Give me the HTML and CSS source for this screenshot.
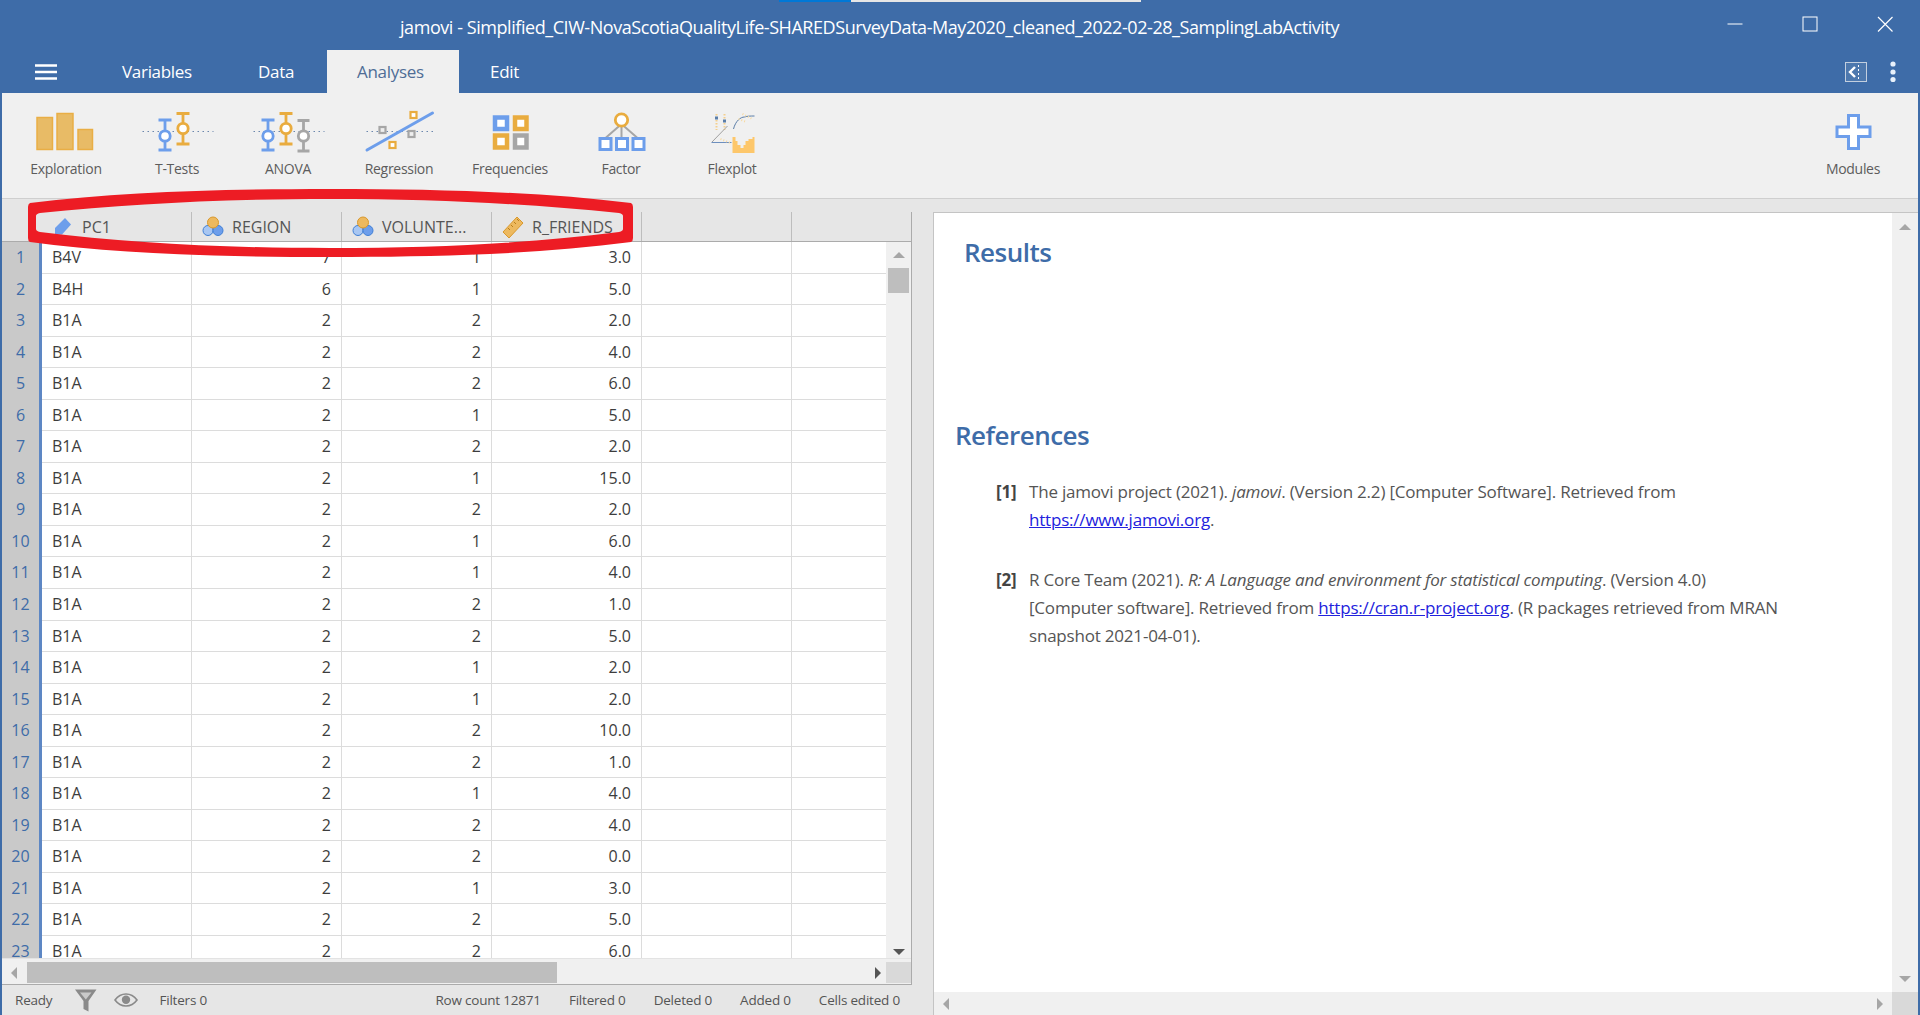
FILE: index.html
```html
<!DOCTYPE html>
<html lang="en">
<head>
    <meta charset="UTF-8">
    <title>jamovi</title>
    <link rel="stylesheet" href="styles.css">
</head>
<body>
    <svg width="0" height="0" class="defs">
        <symbol id="ic-nominal" viewBox="0 0 22 24">
            <circle cx="6" cy="15.500" r="5" fill="#a9c7f2" stroke="#3f7fd6" stroke-width="1"/>
            <circle cx="16" cy="15.500" r="5" fill="#6d9eeb" stroke="#3f7fd6" stroke-width="1"/>
            <circle cx="11" cy="7.500" r="5.500" fill="#edb95f" stroke="#d9982c" stroke-width="1"/>
        </symbol>
    </svg>

    <!-- Title bar -->
    <div class="titlebar">
        <div class="focus-strip"><span class="focus-on"></span></div>
        <div class="title">jamovi - Simplified_CIW-NovaScotiaQualityLife-SHAREDSurveyData-May2020_cleaned_2022-02-28_SamplingLabActivity</div>
        <div class="winbtns">
            <svg width="16" height="16" viewBox="0 0 16 16"><path d="M0.500 8H15.500" stroke="#fff" stroke-width="1" fill="none"/></svg>
            <svg width="16" height="16" viewBox="0 0 16 16"><rect x="1" y="1" width="14" height="14" stroke="#fff" stroke-width="1" fill="none"/></svg>
            <svg width="16" height="16" viewBox="0 0 16 16"><path d="M1 1L15.500 15.500M15.500 1L1 15.500" stroke="#fff" stroke-width="1.200" fill="none"/></svg>
        </div>
    </div>

    <!-- Tabs -->
    <div class="tabbar">
        <svg class="burger" width="22" height="16" viewBox="0 0 22 16"><path d="M0 1.500H22M0 8H22M0 14.500H22" stroke="#fff" stroke-width="2.600"/></svg>
        <div class="tab tab-variables">Variables</div>
        <div class="tab tab-data">Data</div>
        <div class="tab tab-analyses">Analyses</div>
        <div class="tab tab-edit">Edit</div>
        <svg class="split-toggle" width="22" height="20" viewBox="0 0 22 20">
            <rect x="0.500" y="0.500" width="21" height="19" fill="#4d78ae" stroke="#c3cfdf"/>
            <path d="M10 5L5 10L10 15" stroke="#fff" stroke-width="2.400" fill="none"/>
            <path d="M13.500 3V17" stroke="#fff" stroke-width="1" stroke-dasharray="2 2"/>
        </svg>
        <svg class="kebab" width="6" height="22" viewBox="0 0 6 22"><circle cx="3" cy="3" r="2.600" fill="#e8f1fb"/><circle cx="3" cy="11" r="2.600" fill="#e8f1fb"/><circle cx="3" cy="18.500" r="2.600" fill="#e8f1fb"/></svg>
    </div>

    <!-- Toolbar -->
    <div class="toolbar">
        <div class="tool">
            <svg width="111" height="50" viewBox="10.500 108 111 50">
                <g fill="#e8bb66" stroke="#e9ae45" stroke-width="1.500">
                    <rect x="36.500" y="117.500" width="15.500" height="32"/>
                    <rect x="56.500" y="113.500" width="16" height="36"/>
                    <rect x="77.500" y="129.500" width="14.500" height="20"/>
                </g>
            </svg>
            <div class="tool-label">Exploration</div>
        </div>
        <div class="tool">
            <svg width="111" height="50" viewBox="121.500 108 111 50">
                <path d="M142 131.500H213" stroke="#6b87ad" stroke-width="1" stroke-dasharray="1.500 3.500"/>
                <path d="M158 120H171M164.500 120V150M158 150H171" stroke="#6d9eeb" stroke-width="2.800" fill="none"/>
                <circle cx="164.500" cy="136" r="5.200" fill="#fff" stroke="#6d9eeb" stroke-width="2.800"/>
                <path d="M176 113.500H189M182.500 113.500V144M176 144H189" stroke="#e9ac3f" stroke-width="2.800" fill="none"/>
                <circle cx="182.500" cy="128.500" r="5.200" fill="#fff" stroke="#e9ac3f" stroke-width="2.800"/>
            </svg>
            <div class="tool-label">T-Tests</div>
        </div>
        <div class="tool">
            <svg width="111" height="50" viewBox="232.500 108 111 50">
                <path d="M253 131.500H324" stroke="#6b87ad" stroke-width="1" stroke-dasharray="1.500 3.500"/>
                <path d="M261 120H274M267.500 120V150M261 150H274" stroke="#6d9eeb" stroke-width="2.800" fill="none"/>
                <circle cx="267.500" cy="136" r="5.200" fill="#fff" stroke="#6d9eeb" stroke-width="2.800"/>
                <path d="M279 113.500H292M285.500 113.500V144M279 144H292" stroke="#e9ac3f" stroke-width="2.800" fill="none"/>
                <circle cx="285.500" cy="128.500" r="5.200" fill="#fff" stroke="#e9ac3f" stroke-width="2.800"/>
                <path d="M297 120.500H309M303 120.500V151M297 151H309" stroke="#a6a6a6" stroke-width="2.800" fill="none"/>
                <circle cx="303" cy="136" r="5.200" fill="#fff" stroke="#a6a6a6" stroke-width="2.800"/>
            </svg>
            <div class="tool-label">ANOVA</div>
        </div>
        <div class="tool">
            <svg width="111" height="50" viewBox="343.500 108 111 50">
                <path d="M366 131.500H434" stroke="#6b87ad" stroke-width="1" stroke-dasharray="1.500 3.500"/>
                <path d="M366.500 150L432 113" stroke="#6d9eeb" stroke-width="3" stroke-linecap="round"/>
                <g fill="#fff" stroke-width="2.200">
                    <rect x="410" y="112" width="6" height="6" stroke="#e9ac3f"/>
                    <rect x="379" y="127" width="6" height="6" fill="#eee" stroke="#a6a6a6"/>
                    <rect x="408" y="131" width="6" height="6" fill="#eee" stroke="#a6a6a6"/>
                    <rect x="389" y="142" width="6" height="6" stroke="#e9ac3f"/>
                </g>
            </svg>
            <div class="tool-label">Regression</div>
        </div>
        <div class="tool">
            <svg width="111" height="50" viewBox="454.500 108 111 50">
                <g fill="#fff" stroke-width="4.500">
                    <rect x="494.500" y="117.500" width="12" height="11.500" stroke="#6d9eeb"/>
                    <rect x="514.500" y="117.500" width="11.500" height="11.500" stroke="#e9ac3f"/>
                    <rect x="494.500" y="135.500" width="12" height="12" stroke="#e9ac3f"/>
                    <rect x="514.500" y="135.500" width="11.500" height="12" stroke="#a6a6a6"/>
                </g>
            </svg>
            <div class="tool-label">Frequencies</div>
        </div>
        <div class="tool">
            <svg width="111" height="50" viewBox="565.500 108 111 50">
                <path d="M621 124L605 138M621 124V138M621 124L637 138" stroke="#a6a6a6" stroke-width="2" fill="none"/>
                <circle cx="621" cy="120" r="6.200" fill="#fff" stroke="#e9ac3f" stroke-width="2.800"/>
                <g fill="#fff" stroke="#6d9eeb" stroke-width="3">
                    <rect x="599.500" y="138.500" width="11" height="11"/>
                    <rect x="616" y="138.500" width="11" height="11"/>
                    <rect x="632.500" y="138.500" width="11" height="11"/>
                </g>
            </svg>
            <div class="tool-label">Factor</div>
        </div>
        <div class="tool">
            <svg width="111" height="50" viewBox="676.500 108 111 50">
                <path d="M716 114V130M724 114V130" stroke="#f4cf8e" stroke-width="2" stroke-dasharray="1.500 1.500"/>
                <path d="M714.500 118H717.500M722.500 121H725.500" stroke="#5b7ea8" stroke-width="3"/>
                <path d="M733 129C735 121 740 117 744 117C747 116 750 116 754 116" stroke="#5b7ea8" stroke-width="1" fill="none"/>
                <path d="M738 119L746 122M742 114L752 119" stroke="#f7d9a0" stroke-width="2" stroke-dasharray="1 2"/>
                <path d="M711.500 142L727 126" stroke="#a0a0a0" stroke-width="1"/>
                <path d="M711 142.500H731" stroke="#6d8fbe" stroke-width="1"/>
                <path d="M720 139L730 143" stroke="#f7d9a0" stroke-width="2" stroke-dasharray="1 2"/>
                <path d="M732 153V137H735V141H737V145H740V148H743V145H745V141H748V139H752V137H754V153Z" fill="#fdc76b"/>
            </svg>
            <div class="tool-label">Flexplot</div>
        </div>
        <div class="tool tool-modules">
            <svg width="111" height="50" viewBox="1798.500 108 111 50">
                <path d="M1849 115.500H1859V127H1870.500V136.500H1859V148.500H1849V136.500H1837.500V127H1849Z" fill="#fff" stroke="#6d9eeb" stroke-width="3"/>
            </svg>
            <div class="tool-label">Modules</div>
        </div>
    </div>

    <!-- Main area -->
    <div class="workspace">
        <div class="data-pane">
            <div class="grid">
                <div class="grid-head">
                    <div class="head-cell">
                        <svg class="head-icon" width="22" height="24" viewBox="0 0 22 24"><path d="M3 13L13 3L19 9.500L10 19.500H3Z" fill="#6d9eeb"/></svg>
                        <span>PC1</span>
                    </div>
                    <div class="head-cell">
                        <svg class="head-icon" width="22" height="24"><use href="#ic-nominal"/></svg>
                        <span>REGION</span>
                    </div>
                    <div class="head-cell">
                        <svg class="head-icon" width="22" height="24"><use href="#ic-nominal"/></svg>
                        <span>VOLUNTE...</span>
                    </div>
                    <div class="head-cell">
                        <svg class="head-icon" width="22" height="24" viewBox="0 0 22 24">
                            <path d="M1 17L15 2L21 8L7 23Z" fill="#edb95f" stroke="#d9982c" stroke-width="1"/>
                            <path d="M6 13L8 15M9 10L11 12M12 7L14 9M15 4L17 6" stroke="#b97f1c" stroke-width="1"/>
                        </svg>
                        <span>R_FRIENDS</span>
                    </div>
                    <div class="head-cell"></div>
                </div>
                <div class="grid-body">
                    <div class="rows">
                        <div class="row"><div class="num">1</div><div class="cell">B4V</div><div class="cell r">7</div><div class="cell r">1</div><div class="cell r">3.0</div><div class="cell"></div><div class="cell last"></div></div>
                        <div class="row"><div class="num">2</div><div class="cell">B4H</div><div class="cell r">6</div><div class="cell r">1</div><div class="cell r">5.0</div><div class="cell"></div><div class="cell last"></div></div>
                        <div class="row"><div class="num">3</div><div class="cell">B1A</div><div class="cell r">2</div><div class="cell r">2</div><div class="cell r">2.0</div><div class="cell"></div><div class="cell last"></div></div>
                        <div class="row"><div class="num">4</div><div class="cell">B1A</div><div class="cell r">2</div><div class="cell r">2</div><div class="cell r">4.0</div><div class="cell"></div><div class="cell last"></div></div>
                        <div class="row"><div class="num">5</div><div class="cell">B1A</div><div class="cell r">2</div><div class="cell r">2</div><div class="cell r">6.0</div><div class="cell"></div><div class="cell last"></div></div>
                        <div class="row"><div class="num">6</div><div class="cell">B1A</div><div class="cell r">2</div><div class="cell r">1</div><div class="cell r">5.0</div><div class="cell"></div><div class="cell last"></div></div>
                        <div class="row"><div class="num">7</div><div class="cell">B1A</div><div class="cell r">2</div><div class="cell r">2</div><div class="cell r">2.0</div><div class="cell"></div><div class="cell last"></div></div>
                        <div class="row"><div class="num">8</div><div class="cell">B1A</div><div class="cell r">2</div><div class="cell r">1</div><div class="cell r">15.0</div><div class="cell"></div><div class="cell last"></div></div>
                        <div class="row"><div class="num">9</div><div class="cell">B1A</div><div class="cell r">2</div><div class="cell r">2</div><div class="cell r">2.0</div><div class="cell"></div><div class="cell last"></div></div>
                        <div class="row"><div class="num">10</div><div class="cell">B1A</div><div class="cell r">2</div><div class="cell r">1</div><div class="cell r">6.0</div><div class="cell"></div><div class="cell last"></div></div>
                        <div class="row"><div class="num">11</div><div class="cell">B1A</div><div class="cell r">2</div><div class="cell r">1</div><div class="cell r">4.0</div><div class="cell"></div><div class="cell last"></div></div>
                        <div class="row"><div class="num">12</div><div class="cell">B1A</div><div class="cell r">2</div><div class="cell r">2</div><div class="cell r">1.0</div><div class="cell"></div><div class="cell last"></div></div>
                        <div class="row"><div class="num">13</div><div class="cell">B1A</div><div class="cell r">2</div><div class="cell r">2</div><div class="cell r">5.0</div><div class="cell"></div><div class="cell last"></div></div>
                        <div class="row"><div class="num">14</div><div class="cell">B1A</div><div class="cell r">2</div><div class="cell r">1</div><div class="cell r">2.0</div><div class="cell"></div><div class="cell last"></div></div>
                        <div class="row"><div class="num">15</div><div class="cell">B1A</div><div class="cell r">2</div><div class="cell r">1</div><div class="cell r">2.0</div><div class="cell"></div><div class="cell last"></div></div>
                        <div class="row"><div class="num">16</div><div class="cell">B1A</div><div class="cell r">2</div><div class="cell r">2</div><div class="cell r">10.0</div><div class="cell"></div><div class="cell last"></div></div>
                        <div class="row"><div class="num">17</div><div class="cell">B1A</div><div class="cell r">2</div><div class="cell r">2</div><div class="cell r">1.0</div><div class="cell"></div><div class="cell last"></div></div>
                        <div class="row"><div class="num">18</div><div class="cell">B1A</div><div class="cell r">2</div><div class="cell r">1</div><div class="cell r">4.0</div><div class="cell"></div><div class="cell last"></div></div>
                        <div class="row"><div class="num">19</div><div class="cell">B1A</div><div class="cell r">2</div><div class="cell r">2</div><div class="cell r">4.0</div><div class="cell"></div><div class="cell last"></div></div>
                        <div class="row"><div class="num">20</div><div class="cell">B1A</div><div class="cell r">2</div><div class="cell r">2</div><div class="cell r">0.0</div><div class="cell"></div><div class="cell last"></div></div>
                        <div class="row"><div class="num">21</div><div class="cell">B1A</div><div class="cell r">2</div><div class="cell r">1</div><div class="cell r">3.0</div><div class="cell"></div><div class="cell last"></div></div>
                        <div class="row"><div class="num">22</div><div class="cell">B1A</div><div class="cell r">2</div><div class="cell r">2</div><div class="cell r">5.0</div><div class="cell"></div><div class="cell last"></div></div>
                        <div class="row"><div class="num">23</div><div class="cell">B1A</div><div class="cell r">2</div><div class="cell r">2</div><div class="cell r">6.0</div><div class="cell"></div><div class="cell last"></div></div>
                    </div>
                    <div class="vscroll">
                        <span class="arrow up dim"></span>
                        <div class="vthumb"></div>
                        <span class="arrow down dark"></span>
                    </div>
                </div>
                <div class="hscroll">
                    <div class="hbtn"><span class="arrow left dim"></span></div>
                    <div class="hthumb"></div>
                    <div class="hbtn hbtn-right"><span class="arrow right dark"></span></div>
                    <div class="corner"></div>
                </div>
            </div>
            <div class="statusbar">
                <span class="st-ready">Ready</span>
                <svg class="st-funnel" width="22" height="23" viewBox="0 0 22 23"><path d="M0 0.500H21.500L13.500 12V22.500L8.500 20V12Z" fill="#8a8a8a"/><path d="M5 3.500H16.500L10.800 10.500Z" fill="#c9c9c9"/></svg>
                <svg class="st-eye" width="24" height="14" viewBox="0 0 24 14"><path d="M1 7C5 1.500 8.500 1 12 1C15.500 1 19 1.500 23 7C19 12.500 15.500 13 12 13C8.500 13 5 12.500 1 7Z" fill="none" stroke="#8a8a8a" stroke-width="1.600"/><circle cx="12" cy="6.800" r="4.200" fill="#8a8a8a"/></svg>
                <span class="st-filters">Filters 0</span>
                <div class="st-counts">
                    <span>Row count 12871</span>
                    <span>Filtered 0</span>
                    <span>Deleted 0</span>
                    <span>Added 0</span>
                    <span>Cells edited 0</span>
                </div>
            </div>
        </div>

        <div class="results-pane">
            <div class="results-main">
                <div class="results">
                    <h1 class="h-results">Results</h1>
                    <h1 class="h-refs">References</h1>
                    <div class="ref">
                        <span class="ref-no">[1]</span>
                        <p>The jamovi project (2021). <em>jamovi</em>. (Version 2.2) [Computer Software]. Retrieved from<br><a href="#">https://www.jamovi.org</a>.</p>
                    </div>
                    <div class="ref">
                        <span class="ref-no">[2]</span>
                        <p>R Core Team (2021). <em>R: A Language and environment for statistical computing</em>. (Version 4.0)<br>[Computer software]. Retrieved from <a href="#">https://cran.r-project.org</a>. (R packages retrieved from MRAN<br>snapshot 2021-04-01).</p>
                    </div>
                </div>
                <div class="res-vscroll">
                    <span class="arrow up dim"></span>
                    <span class="arrow down dim"></span>
                </div>
            </div>
            <div class="res-hscroll">
                <span class="arrow left dim"></span>
                <span class="arrow right dim"></span>
                <div class="res-corner"></div>
            </div>
        </div>
    </div>

    <!-- Red marker drawn over the column headers -->
    <svg class="annotation" width="1920" height="1015" viewBox="0 0 1920 1015">
        <path fill="#ed1c24" fill-rule="evenodd" d="M30 203C120 192 220 189 330 189C440 189 540 192 631 203Q633 204 633 207V238Q633 241 631 242C540 254 440 257 330 257C220 257 120 254 30 242Q28 241 28 238V207Q28 204 30 203ZM40 213Q36 214 36 216V229Q36 231 40 232C130 243 220 248 330 248C440 248 530 243 619 232Q623 231 623 229V216Q623 214 619 213C530 204 440 199 330 199C220 199 130 204 40 213Z"/>
    </svg>
</body>
</html>
```

FILE: styles.css
```css
/* General */
* {
    box-sizing: border-box;
}

html, body {
    margin: 0;
    padding: 0;
    height: 1015px;
    overflow: hidden;
}

body {
    display: flex;
    flex-direction: column;
    position: relative;
    font-family: "Open Sans", "Noto Sans", sans-serif;
    background-color: #3e6ca8;
    color: #555;
}

.defs {
    position: absolute;
}

/* Title bar */
.titlebar {
    height: 50px;
    flex: none;
    display: flex;
    position: relative;
}

.focus-strip {
    position: absolute;
    top: 0;
    left: 779px;
    width: 362px;
    height: 2px;
    background-color: #e6e6e6;
}

.focus-on {
    display: block;
    width: 72px;
    height: 2px;
    background-color: #0078d7;
}

.title {
    position: absolute;
    left: 400px;
    top: 14px;
    font-size: 18px;
    line-height: 27px;
    color: #fff;
    white-space: nowrap;
    letter-spacing: -0.44px;
}

.winbtns {
    margin-left: auto;
    padding: 16px 27px 0 0;
    display: flex;
    gap: 59px;
    align-items: flex-start;
}

/* Tabs */
.tabbar {
    height: 43px;
    flex: none;
    display: flex;
    align-items: center;
    position: relative;
    color: #fff;
    font-size: 17px;
}

.burger {
    margin-left: 35px;
}

.tab {
    height: 43px;
    line-height: 44px;
    letter-spacing: -0.3px;
}

.tab-variables {
    margin-left: 65px;
    width: 136px;
}

.tab-data {
    width: 69px;
}

.tab-analyses {
    width: 132px;
    padding-left: 30px;
    background-color: #f0f0f0;
    color: #4f6d96;
}

.tab-edit {
    margin-left: 31px;
}

.split-toggle {
    margin-left: auto;
}

.kebab {
    margin: 0 24px 0 23px;
}

/* Toolbar */
.toolbar {
    height: 106px;
    flex: none;
    display: flex;
    margin: 0 2px;
    padding: 15px 0 0 8.5px;
    background-color: #f0f0f0;
    border-bottom: 1px solid #cfcfcf;
}

.tool {
    width: 111px;
}

.tool svg {
    display: block;
}

.tool-label {
    height: 22px;
    line-height: 22px;
    text-align: center;
    font-size: 14px;
    letter-spacing: -0.3px;
    color: #5c5c5c;
}

.tool-modules {
    margin-left: auto;
    margin-right: 9.500px;
}

/* Main area */
.workspace {
    flex: 1;
    display: flex;
    margin: 0 2px;
    background-color: #e6e6e6;
    min-height: 0;
}

.data-pane {
    width: 910px;
    flex: none;
    display: flex;
    flex-direction: column;
    padding-top: 13px;
}

.grid {
    flex: 1;
    display: flex;
    flex-direction: column;
    min-height: 0;
    border-right: 1px solid #ababab;
    border-bottom: 1px solid #ababab;
}

.grid-head {
    height: 30px;
    flex: none;
    display: grid;
    grid-template-columns: repeat(5, 150px);
    padding-left: 40px;
}

.head-cell {
    display: flex;
    align-items: center;
    padding-left: 10px;
    gap: 8px;
    border-right: 1px solid #bdbdbd;
    font-size: 16px;
    color: #555;
    white-space: nowrap;
    overflow: hidden;
}

.head-icon {
    flex: none;
}

.grid-body {
    flex: 1;
    display: flex;
    min-height: 0;
    overflow: hidden;
    border-top: 1px solid #ababab;
    margin-top: -1px;
}

.rows {
    width: 884px;
    flex: none;
}

.row {
    height: 31.550px;
    display: grid;
    grid-template-columns: 40px repeat(5, 150px) 1fr;
    background-color: #fff;
    border-bottom: 1px solid #dcdcdc;
}

.num {
    background-color: #c9c9c9;
    border-right: 3px solid #5d87c4;
    text-align: center;
    font-size: 16px;
    line-height: 30px;
    color: #3e6ca8;
    margin-bottom: -1px;
}

.cell {
    padding: 0 10px;
    border-right: 1px solid #dcdcdc;
    font-size: 16px;
    line-height: 31px;
    color: #3d3d3d;
}

.cell.r {
    text-align: right;
}

.cell.last {
    border-right: none;
}

/* Scrollbars */
.arrow {
    display: block;
    width: 0;
    height: 0;
    border-style: solid;
    border-color: transparent;
}

.arrow.up {
    border-width: 0 6px 6px;
    border-bottom-color: #a6a6a6;
}

.arrow.down {
    border-width: 6px 6px 0;
    border-top-color: #a6a6a6;
}

.arrow.left {
    border-width: 6px 6px 6px 0;
    border-right-color: #a6a6a6;
}

.arrow.right {
    border-width: 6px 0 6px 6px;
    border-left-color: #a6a6a6;
}

.arrow.down.dark {
    border-top-color: #555;
}

.arrow.right.dark {
    border-left-color: #555;
}

.vscroll {
    flex: 1;
    display: flex;
    flex-direction: column;
    align-items: center;
    padding-top: 10px;
    padding-bottom: 3px;
    background-color: #f0f0f0;
}

.vthumb {
    width: 21px;
    height: 25px;
    margin-top: 10px;
    background-color: #bebebe;
}

.vscroll .arrow.down {
    margin-top: auto;
    margin-bottom: 0;
}

.hscroll {
    height: 26px;
    flex: none;
    display: flex;
    padding-top: 3px;
    background-color: #f0f0f0;
    border-top: 1px solid #e3e3e3;
}

.hbtn {
    width: 25px;
    height: 21px;
    display: flex;
    align-items: center;
    padding-left: 9px;
}

.hthumb {
    width: 530px;
    height: 21px;
    background-color: #bebebe;
}

.hbtn-right {
    flex: 1;
    justify-content: flex-end;
    padding-right: 5px;
}

.corner {
    width: 25px;
    height: 21px;
    background-color: #d9d9d9;
}

/* Status bar */
.statusbar {
    height: 30px;
    flex: none;
    display: flex;
    align-items: center;
    font-size: 13.500px;
    letter-spacing: -0.2px;
    color: #555;
    white-space: nowrap;
}

.st-ready {
    margin-left: 13px;
}

.st-funnel {
    margin-left: 23px;
}

.st-eye {
    margin-left: 17px;
}

.st-filters {
    margin-left: 21px;
}

.st-counts {
    margin-left: auto;
    padding-right: 12px;
    display: flex;
    gap: 28px;
}

/* Results */
.results-pane {
    flex: 1;
    display: flex;
    flex-direction: column;
    margin-top: 13px;
    margin-left: 21px;
    background-color: #fff;
    border-top: 1px solid #c4c4c4;
    border-left: 1px solid #c4c4c4;
    min-width: 0;
}

.results-main {
    flex: 1;
    display: flex;
    min-height: 0;
}

.results {
    flex: 1;
    padding: 0 0 0 21px;
    font-size: 17px;
    line-height: 28px;
    color: #555;
}

h1 {
    margin: 0;
    font-size: 26px;
    font-weight: 600;
    color: #3e6ca8;
    letter-spacing: -0.5px;
}

.h-results {
    padding: 21px 0 0 9px;
    line-height: 36px;
}

.h-refs {
    margin-top: 147px;
    line-height: 36px;
}

.ref {
    display: flex;
    margin: 25px 0 0 41px;
    letter-spacing: -0.2px;
}

.ref + .ref {
    margin-top: 32px;
}

.ref-no {
    width: 33px;
    flex: none;
    font-weight: 700;
    color: #444;
}

.ref p {
    margin: 0;
    white-space: nowrap;
}

a {
    color: #2222dd;
}

.res-vscroll {
    width: 26px;
    flex: none;
    display: flex;
    flex-direction: column;
    align-items: center;
    justify-content: space-between;
    padding: 11px 0 10px;
    background-color: #f0f0f0;
}

.res-hscroll {
    height: 23px;
    flex: none;
    display: flex;
    align-items: center;
    padding-left: 9px;
    background-color: #f0f0f0;
}

.res-hscroll .arrow.right {
    margin-left: auto;
    margin-right: 9px;
}

.res-corner {
    width: 26px;
    height: 23px;
    background-color: #d9d9d9;
}

/* Marker */
.annotation {
    position: absolute;
    left: 0;
    top: 0;
    pointer-events: none;
}
```
